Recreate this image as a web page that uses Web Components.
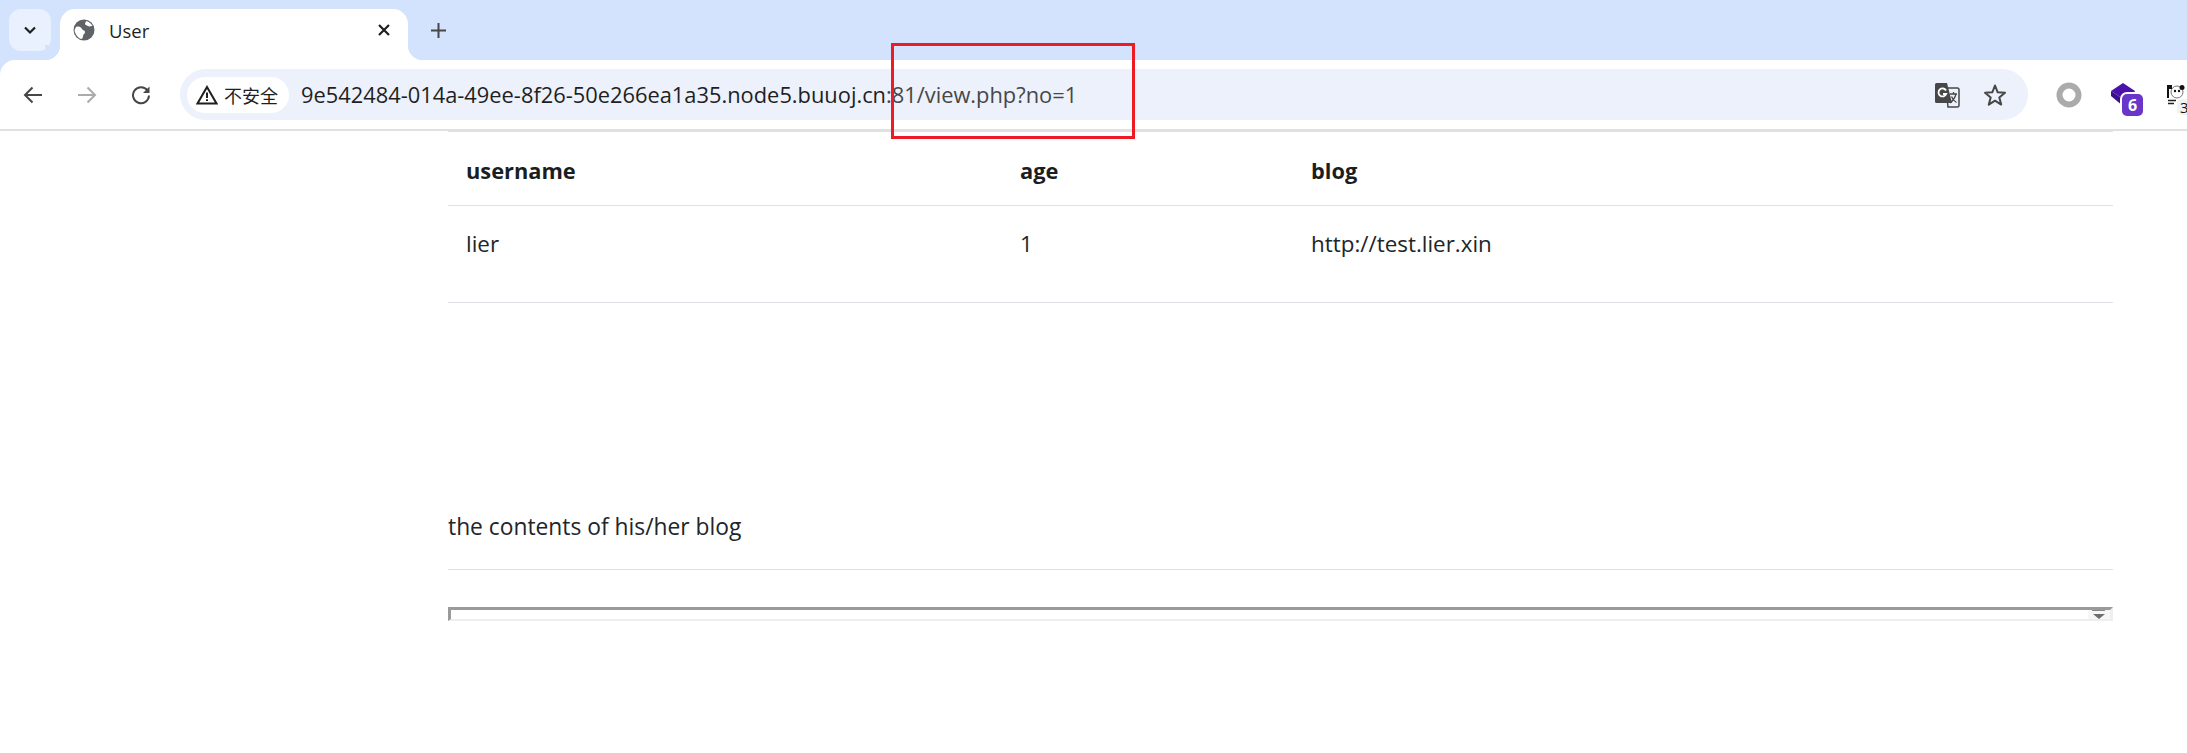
<!DOCTYPE html>
<html lang="zh">
<head>
<meta charset="utf-8">
<title>User</title>
<style>
  html, body { margin: 0; padding: 0; background: #fff; overflow: hidden; }
  body { width: 2187px; height: 753px; position: relative; font-family: "Open Sans", "Noto Sans", "Liberation Sans", sans-serif; }
</style>
</head>
<body>
<browser-chrome url-host="9e542484-014a-49ee-8f26-50e266ea1a35.node5.buuoj.cn" url-rest=":81/view.php?no=1" tab-title="User"></browser-chrome>
<user-page>
  <user-table></user-table>
  <blog-frame></blog-frame>
</user-page>
<red-mark></red-mark>

<script>
class BrowserChrome extends HTMLElement {
  constructor() {
    super();
    this.attachShadow({ mode: 'open' });
  }

  connectedCallback() {
    const host = this.getAttribute('url-host') || '';
    const rest = this.getAttribute('url-rest') || '';
    const title = this.getAttribute('tab-title') || '';
    this.shadowRoot.innerHTML = `
      <style>
        :host { display: block; background: #d3e3fd; font-family: "Open Sans", "Noto Sans", sans-serif; }
        .strip { height: 60px; display: flex; align-items: flex-start; box-sizing: border-box; padding: 9px 0 0 9px; }
        .drop { width: 42px; height: 42px; border-radius: 12px; background: #e9f0fe; display: flex; align-items: center; justify-content: center; margin-right: 9px; }
        .tab { width: 348px; height: 51px; background: #fff; border-radius: 15px 15px 0 0; display: flex; align-items: center; box-sizing: border-box; padding: 0 17px 9px 13px; position: relative; }
        .tab::before, .tab::after { content: ""; position: absolute; bottom: 0; width: 15px; height: 15px; background: radial-gradient(circle at 0 0, #d3e3fd 15px, #fff 15.5px); }
        .tab::before { left: -15px; }
        .tab::after { right: -15px; background: radial-gradient(circle at 100% 0, #d3e3fd 15px, #fff 15.5px); }
        .tab .name { font-size: 18.500px; color: #1f1f1f; margin-left: 14px; flex: 1; }
        .plus { margin: 6px 0 0 15px; width: 30px; height: 30px; display: flex; align-items: center; justify-content: center; }
        .bar { height: 69px; background: #fff; border-radius: 15px 0 0 0; display: flex; align-items: center; }
        .nav { display: flex; align-items: center; padding: 0 0 0 6px; width: 171px; box-sizing: border-box; flex: none; }
        .nav span { width: 54px; display: flex; justify-content: center; }
        .omni { flex: none; width: 1848px; height: 51px; border-radius: 26px; background: #ecf1fb; display: flex; align-items: center; box-sizing: border-box; padding: 0 21px 0 7px; margin-left: 9px; }
        .chip { height: 36px; width: 102px; background: #fff; border-radius: 18px; display: flex; align-items: center; box-sizing: border-box; padding-left: 9px; gap: 6px; font: 18px "Noto Sans CJK SC", sans-serif; color: #1f1f1f; flex: none; }
        .url { font-size: 21.850px; margin-left: 12px; color: #1f1f1f; white-space: nowrap; flex: 1; }
        .url em { font-style: normal; color: #474747; }
        .end { display: flex; align-items: center; gap: 23px; }
        .ext { display: flex; align-items: center; margin-left: 28px; position: relative; flex: none; }
        .badge { position: absolute; left: 66px; top: 12px; width: 21px; height: 22px; border-radius: 5px; background: #6a35c9; color: #fff; font: bold 16px/22px "Open Sans", sans-serif; text-align: center; box-shadow: 0 0 0 2px #fff; }
        .three { position: absolute; left: 121px; top: 17px; width: 22px; height: 16px; border-radius: 5px; background: #f2f2f2; color: #111; font: 15px/16px "Open Sans", sans-serif; padding-left: 3px; }
        .rule { height: 2px; background: #e0e0e0; }
      </style>
      <div class="strip">
        <div class="drop">
          <svg width="14" height="14" viewBox="0 0 14 14"><path d="M2 4.500 7 9.500 12 4.500" fill="none" stroke="#1f1f1f" stroke-width="2.200"/></svg>
        </div>
        <div class="tab">
          <svg width="22" height="22" viewBox="0 0 22 22"><circle cx="11" cy="11" r="10.500" fill="#5f6368"/><path d="M3 8c3-1 5 0 6 2s3 1 3 3-2 2-2 4-1 3-2 3C5 19 2 15 1.500 11ZM13 2c2 .5 5 2 6.500 5-2 0-3 1-4.500 0s-3-1-3-2 1-2 1-3Z" fill="#fff"/></svg>
          <span class="name">${title}</span>
          <svg width="14" height="14" viewBox="0 0 14 14"><path d="M2 2 12 12M12 2 2 12" stroke="#1f1f1f" stroke-width="2.200"/></svg>
        </div>
        <div class="plus">
          <svg width="15" height="15" viewBox="0 0 15 15"><path d="M7.500 0V15M0 7.500H15" stroke="#474747" stroke-width="2"/></svg>
        </div>
      </div>
      <div class="bar">
        <div class="nav">
          <span><svg width="20" height="20" viewBox="0 0 20 20"><path d="M19 10H2M9.500 2.500 2 10l7.500 7.500" fill="none" stroke="#474747" stroke-width="2"/></svg></span>
          <span><svg width="20" height="20" viewBox="0 0 20 20"><path d="M1 10H18M10.500 2.500 18 10l-7.500 7.500" fill="none" stroke="#ababab" stroke-width="2"/></svg></span>
          <span><svg width="20" height="20" viewBox="0 0 20 20"><path d="M16.500 5.500A8 8 0 1 0 18 10.500" fill="none" stroke="#474747" stroke-width="2"/><path d="M18.500 1.500V8H12Z" fill="#474747"/></svg></span>
        </div>
        <div class="omni">
          <div class="chip">
            <svg width="22" height="20" viewBox="0 0 22 20"><path d="M11 2 20.500 18.500H1.500Z" fill="none" stroke="#1f1f1f" stroke-width="2"/><path d="M11 7.500V13M11 14.200V16" stroke="#1f1f1f" stroke-width="2"/></svg>
            <span>不安全</span>
          </div>
          <div class="url">${host}<em>${rest}</em></div>
          <div class="end">
            <svg width="26" height="26" viewBox="0 0 26 26"><path d="M12 6H23.500a1.500 1.500 0 0 1 1.500 1.500V23.500A1.500 1.500 0 0 1 23.500 25H14Z" fill="#ecf1fb" stroke="#474747" stroke-width="1.500"/><path d="M2.500 1H13l5 20H2.500A1.500 1.500 0 0 1 1 19.500V2.500A1.500 1.500 0 0 1 2.500 1Z" fill="#474747"/><path d="M12 8.500A4 4 0 1 0 12.200 12H9" fill="none" stroke="#fff" stroke-width="1.800"/><path d="M16 12H23M19.500 10V12M22 12C21 16 18.500 19 16 21M17.500 14.500C18.500 17 20 19 22.500 20.500" fill="none" stroke="#474747" stroke-width="1.300"/></svg>
            <svg width="24" height="24" viewBox="0 0 24 24"><path d="M12 2.500 14.700 9.300 22 9.800 16.300 14.500 18.200 21.600 12 17.700 5.800 21.600 7.700 14.500 2 9.800 9.300 9.300Z" fill="none" stroke="#474747" stroke-width="2" stroke-linejoin="round"/></svg>
          </div>
        </div>
        <div class="ext">
          <svg width="26" height="26" viewBox="0 0 26 26"><circle cx="13" cy="13" r="9.500" fill="none" stroke="#ababab" stroke-width="6"/></svg>
          <svg style="margin-left:28px" width="26" height="24" viewBox="0 0 26 24"><path d="M13 0 25 8 13 16 1 8Z" fill="#4a12a8"/><path d="M1 13 13 23 25 13 25 8 13 16 1 8Z" fill="#39108a"/></svg>
          <span class="badge">6</span>
          <svg style="margin-left:31px" width="18" height="20" viewBox="0 0 18 20"><circle cx="10" cy="7" r="6" fill="#fff" stroke="#777" stroke-width="1"/><path d="M0 0H5V4H2V13H0Z" fill="#111"/><circle cx="15" cy="2.500" r="2.500" fill="#111"/><circle cx="8" cy="6" r="1.200" fill="#111"/><circle cx="12" cy="6" r="1.200" fill="#111"/><path d="M1 15.500H9M1 18.500H7" stroke="#222" stroke-width="1.500"/></svg>
          <span class="three">3</span>
        </div>
      </div>
      <div class="rule"></div>
    `;
  }
}

class UserPage extends HTMLElement {
  constructor() {
    super();
    this.attachShadow({ mode: 'open' });
    this.shadowRoot.innerHTML = `
      <style>
        :host { display: block; padding: 0 74px 0 448px; font-family: "Open Sans", "Noto Sans", sans-serif; color: #212529; }
      </style>
      <slot></slot>
    `;
  }
}

class UserTable extends HTMLElement {
  constructor() {
    super();
    this.attachShadow({ mode: 'open' });
    this.shadowRoot.innerHTML = `
      <style>
        :host { display: block; font-size: 22.400px; border-top: 1px solid #dee2e6; }
        .row { display: grid; grid-template-columns: 554px 291px 1fr; padding: 0 18px; border-bottom: 1px solid #dee2e6; box-sizing: border-box; }
        .head { height: 74px; align-items: center; font-weight: 700; font-size: 21.800px; color: #1b1e21; padding-top: 3px; }
        .body { height: 97px; padding-top: 22px; }
      </style>
      <div class="row head"><span>username</span><span>age</span><span>blog</span></div>
      <div class="row body"><span>lier</span><span>1</span><span>http://test.lier.xin</span></div>
    `;
  }
}

class BlogFrame extends HTMLElement {
  constructor() {
    super();
    this.attachShadow({ mode: 'open' });
    this.shadowRoot.innerHTML = `
      <style>
        :host { display: block; padding-top: 203px; font-size: 22.800px; }
        p { margin: 0; height: 60px; padding-top: 3px; box-sizing: content-box; border-bottom: 1px solid #dee2e6; line-height: 36px; }
        .frame { margin-top: 37px; height: 14px; box-sizing: border-box; border-top: 3px solid #9a9a9a; border-left: 3px solid #9a9a9a; border-right: 3px solid #eeeeee; border-bottom: 2px solid #eeeeee; position: relative; overflow: hidden; }
        .arrow { position: absolute; right: 0; top: 0; width: 22px; height: 9px; background: #f7f7f7; }
        .arrow::before { content: ""; position: absolute; left: 4px; top: 0; width: 13px; height: 1px; background: #8a8a8a; }
        .arrow::after { content: ""; position: absolute; left: 5px; top: 4px; width: 0; height: 0; border: 6px solid transparent; border-top: 5px solid #6e6e6e; border-bottom: 0; }
      </style>
      <p>the contents of his/her blog</p>
      <div class="frame"><div class="arrow"></div></div>
    `;
  }
}

class RedMark extends HTMLElement {
  constructor() {
    super();
    this.attachShadow({ mode: 'open' });
    this.shadowRoot.innerHTML = `
      <style>
        :host { display: block; position: absolute; left: 891px; top: 43px; width: 244px; height: 96px; box-sizing: border-box; border: 3px solid #ed1c24; }
      </style>
    `;
  }
}

customElements.define('browser-chrome', BrowserChrome);
customElements.define('user-page', UserPage);
customElements.define('user-table', UserTable);
customElements.define('blog-frame', BlogFrame);
customElements.define('red-mark', RedMark);
</script>
</body>
</html>
